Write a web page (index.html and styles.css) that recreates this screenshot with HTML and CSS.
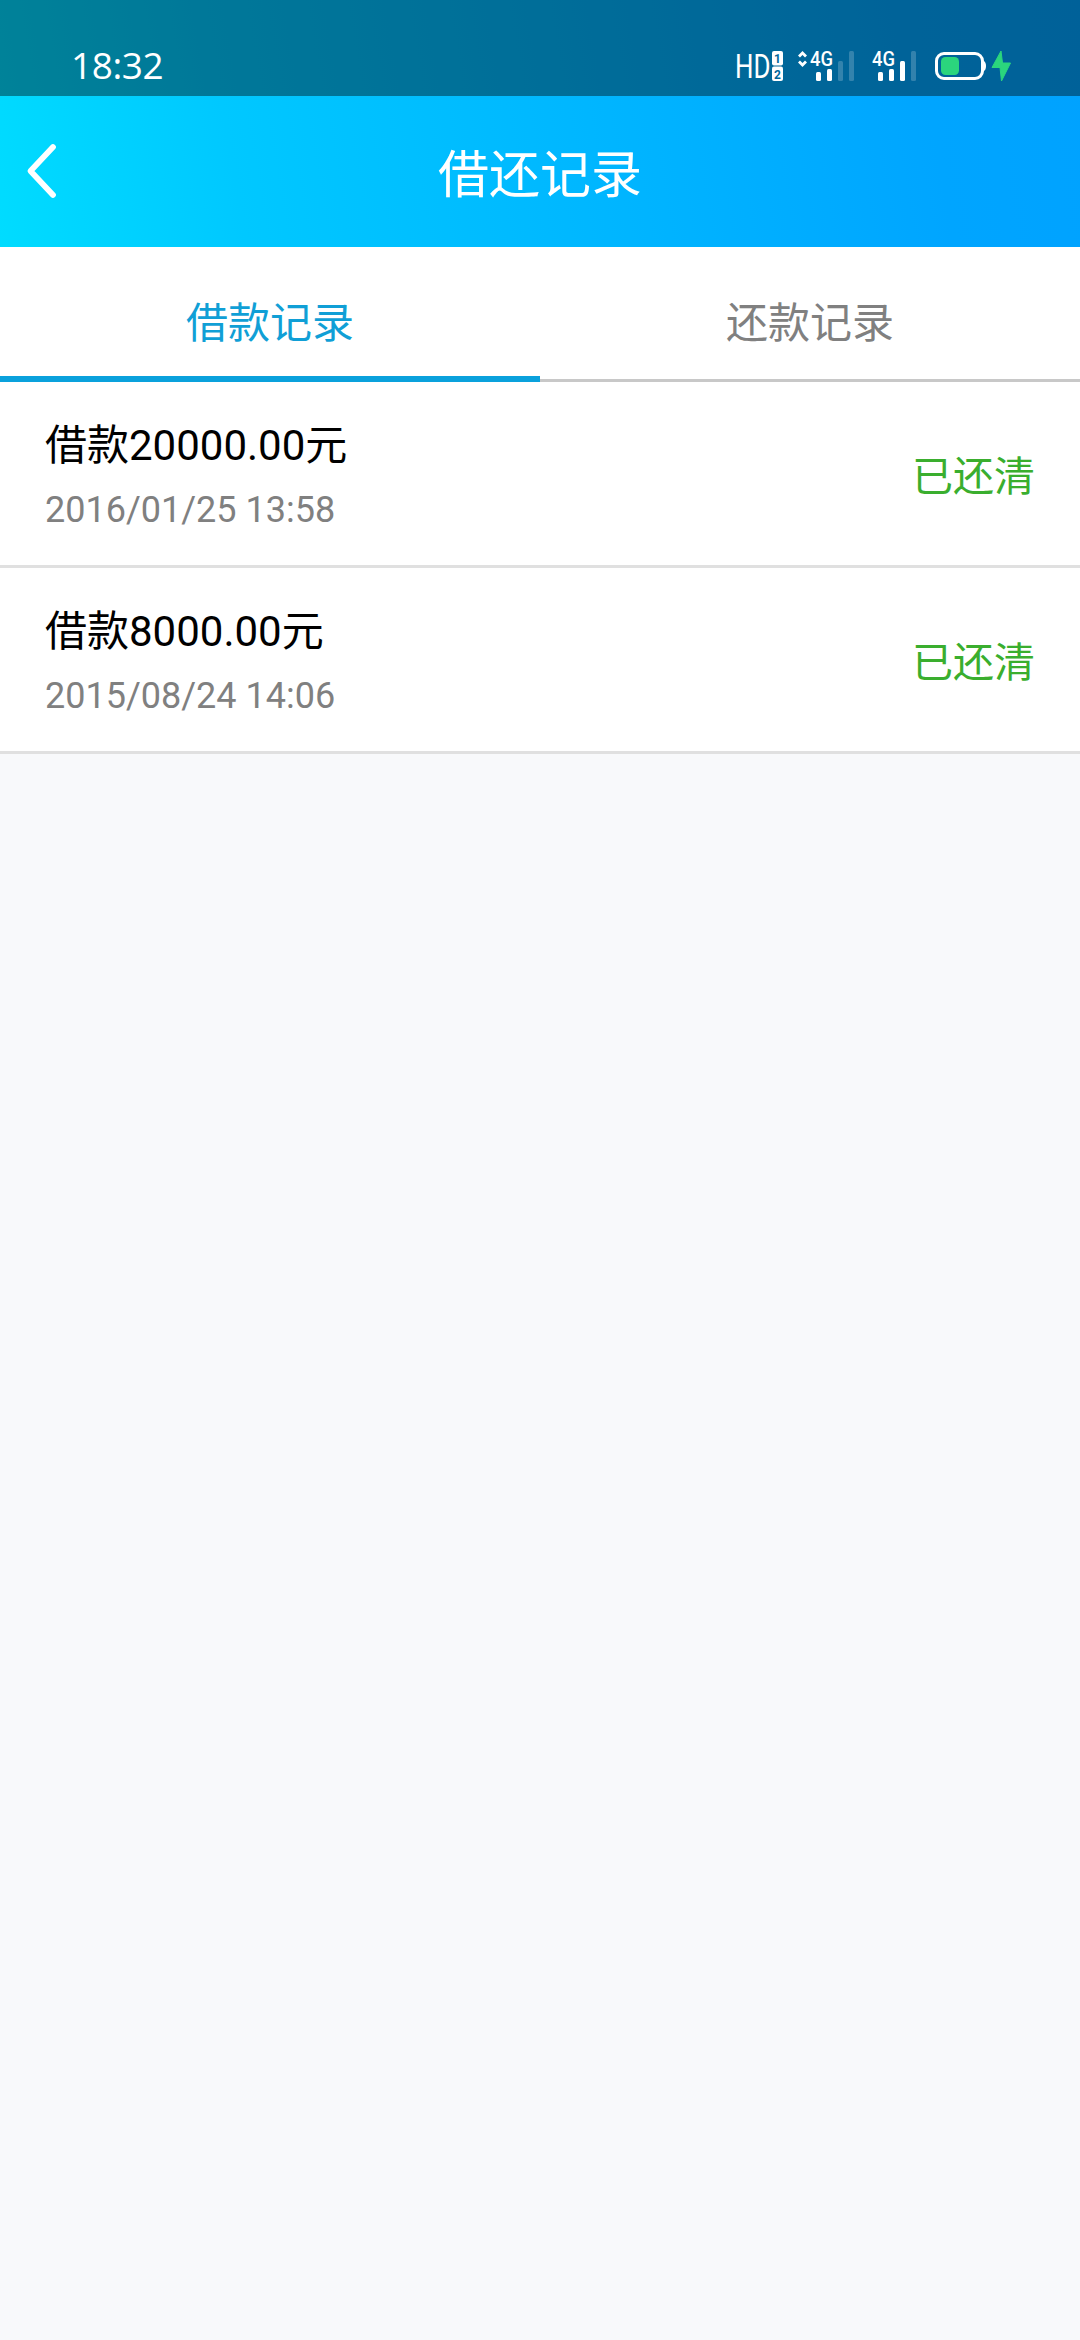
FILE: index.html
```html
<!DOCTYPE html>
<html lang="zh-CN">
<head>
<meta charset="utf-8">
<title>借还记录</title>
<link rel="stylesheet" href="styles.css">
</head>
<body>
<div class="top">
  <div class="status-bar">
    <span class="clock">18:32</span>
    <svg class="status-icons" width="290" height="40" viewBox="0 0 290 40" fill="#fff">
      <text class="hd" x="1" y="30" textLength="35.500" lengthAdjust="spacingAndGlyphs">HD</text>
      <rect x="38" y="3" width="11" height="14.500" rx="2"/>
      <rect x="38" y="18.500" width="11" height="14.500" rx="2"/>
      <text class="sim" x="43.500" y="14.500">1</text>
      <text class="sim" x="43.500" y="30.500">2</text>
      <path d="M65 8.500l3.500-3.500 3.500 3.500M65 13.500l3.500 3.500 3.500-3.500" fill="none" stroke="#fff" stroke-width="2.800"/>
      <text class="net" x="76" y="18" textLength="23" lengthAdjust="spacingAndGlyphs">4G</text>
      <rect x="82" y="24" width="5" height="9" rx="1.500"/>
      <rect x="93" y="21" width="5" height="12" rx="1.500"/>
      <rect class="dim" x="104" y="13" width="5" height="20" rx="1.500"/>
      <rect class="dim" x="115" y="3" width="5" height="30" rx="1.500"/>
      <text class="net" x="138" y="18" textLength="23" lengthAdjust="spacingAndGlyphs">4G</text>
      <rect x="144" y="24" width="5" height="9" rx="1.500"/>
      <rect x="155" y="21" width="5" height="12" rx="1.500"/>
      <rect x="166" y="13" width="5" height="20" rx="1.500"/>
      <rect class="dim" x="177" y="3" width="5" height="30" rx="1.500"/>
      <rect x="202.500" y="5.500" width="46" height="25" rx="7.500" fill="none" stroke="#fff" stroke-width="3"/>
      <path d="M249 12.500q3 1 3 5.500t-3 5.500z"/>
      <rect x="207" y="9" width="18" height="18" rx="4.500" fill="#2bd57d"/>
      <path d="M267 3L258 19.500h8L267.500 33 276.500 15h-8z" fill="#2bd57d" stroke="#2bd57d" stroke-width="1" stroke-linejoin="round"/>
    </svg>
  </div>
  <header class="header">
    <svg class="back" width="34" height="58" viewBox="0 0 34 58"><path d="M28 5L5.500 29 28 53" fill="none" stroke="#fff" stroke-width="5.800" stroke-linecap="round" stroke-linejoin="round"/></svg>
    <h1 class="title">借还记录</h1>
  </header>
</div>
<nav class="tabs">
  <a class="tab tab-active">借款记录</a>
  <a class="tab">还款记录</a>
</nav>
<main>
  <div class="record">
    <div class="info">
      <div class="amount">借款20000.00元</div>
      <div class="date">2016/01/25 13:58</div>
    </div>
    <div class="state">已还清</div>
  </div>
  <div class="record">
    <div class="info">
      <div class="amount">借款8000.00元</div>
      <div class="date">2015/08/24 14:06</div>
    </div>
    <div class="state">已还清</div>
  </div>
</main>
</body>
</html>
```
FILE: styles.css
```css
* { box-sizing: border-box; }
body {
  margin: 0;
  min-height: 2340px;
  background: #f8f9fb;
  font-family: Roboto, "Noto Sans CJK SC", sans-serif;
}
.top { background: linear-gradient(80deg, #00dcff 0%, #00c8ff 22%, #00a5ff 85%, #00a2ff 100%); }
.status-bar {
  height: 96px;
  padding: 48px 56px 0 71px;
  display: flex;
  justify-content: space-between;
  align-items: flex-start;
  background: rgba(0, 0, 0, 0.4);
  color: #fff;
}
.clock { font: 37px/34px "Open Sans", sans-serif; letter-spacing: -0.4px; }
.hd { font: 33px Roboto, sans-serif; }
.sim { font: bold 12px Roboto, sans-serif; fill: #006699; text-anchor: middle; }
.net { font: 500 21px Roboto, sans-serif; }
.dim { opacity: 0.2; }
.header {
  height: 151px;
  display: grid;
  grid-template-columns: 80px 1fr 80px;
  align-items: center;
}
.back { margin: 0 0 2px 25px; }
.title {
  margin: 0;
  padding-top: 9px;
  text-align: center;
  font-weight: 400;
  font-size: 51px;
  line-height: 60px;
  color: #fff;
}
.tabs { display: flex; height: 135px; background: #fff; }
.tab {
  flex: 1;
  text-align: center;
  font-size: 42px;
  line-height: 153px;
  height: 135px;
  color: #808080;
  border-bottom: 3px solid #c8c8c8;
}
.tab-active { color: #109fd6; border-bottom: 6px solid #0aa1dc; }
.record {
  height: 186px;
  padding: 6px 45px 0;
  display: flex;
  align-items: center;
  justify-content: space-between;
  background: #fff;
  border-bottom: 3px solid #e0e0e0;
}
.info { padding-top: 4px; }
.amount { font-size: 42px; line-height: 64px; color: #000; }
.date { font-size: 36px; line-height: 65px; color: #808080; }
.state { font-size: 41px; line-height: 60px; color: #3aae2e; }
```
